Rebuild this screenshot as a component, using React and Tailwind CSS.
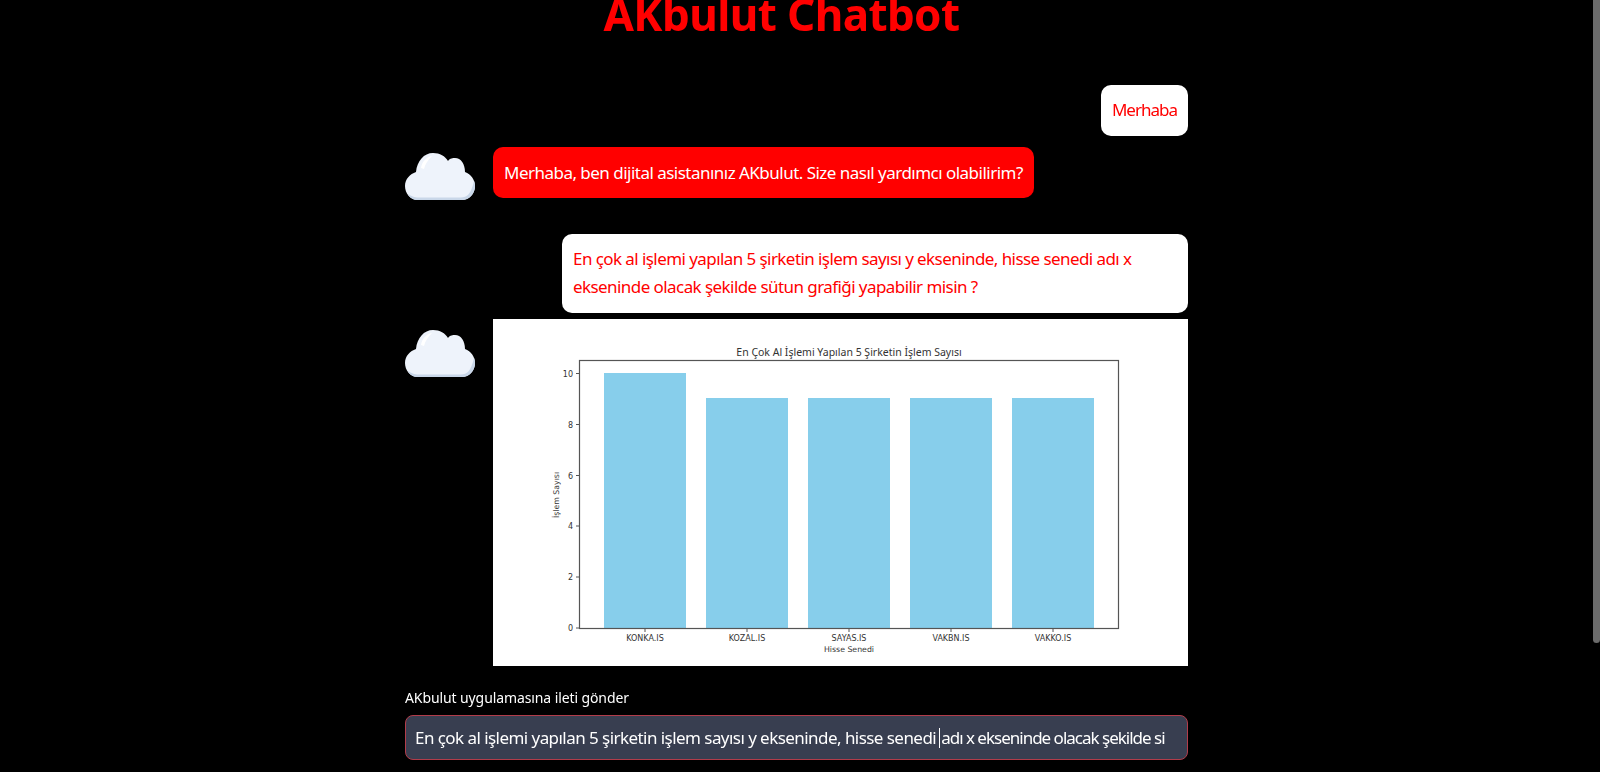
const FONT = "font-['Noto_Sans','Open_Sans',sans-serif]";

function Cloud() {
  return (
    <svg width="70" height="47" viewBox="0 0 70 47" className="shrink-0" aria-hidden="true">
      <path d="M13 47 C5 47 0 40 0 33 C0 26 5 21 11 19 C12 8 19 0 28 0 C35 0 40 3 43 8 C45 5 48 5 50 5 C56 5 60 11 60 19 C66 21 70 27 70 33 C70 41 64 47 57 47 Z" fill="#eef3fb" />
      <path d="M3 41 C7 44 11 44.5 15 44.5 L56 44.5 C62 44.5 66 41 69 28 C70 30 70 32 70 33 C70 41 64 47 57 47 L13 47 C8 47 5 45 3 41 Z" fill="#c9d7e9" />
      <path d="M16 15 C17 9 21 4 27 3 C23 7 20 11 19 16 Z" fill="#ffffff" />
    </svg>
  );
}

const BARS = [
  { x: 604, h: 255, label: "KONKA.IS" },
  { x: 706, h: 230, label: "KOZAL.IS" },
  { x: 808, h: 230, label: "SAYAS.IS" },
  { x: 910, h: 230, label: "VAKBN.IS" },
  { x: 1012, h: 230, label: "VAKKO.IS" },
];
const TICKS = [
  { v: "0", y: 628 }, { v: "2", y: 577 }, { v: "4", y: 526 },
  { v: "6", y: 475.5 }, { v: "8", y: 424.5 }, { v: "10", y: 373.5 },
];

function Chart() {
  return (
    <svg width="695" height="347" viewBox="493 319 695 347" className="block bg-white" role="img">
      <g fontFamily="'DejaVu Sans', sans-serif" fill="#333">
        <text x="849" y="356" fontSize="10.5" textAnchor="middle" fontFamily="'Noto Sans', sans-serif">En Çok Al İşlemi Yapılan 5 Şirketin İşlem Sayısı</text>
        {BARS.map((b) => (
          <rect key={b.x} x={b.x} y={628 - b.h} width="82" height={b.h} fill="#87ceeb" />
        ))}
        <rect x="579.5" y="360.5" width="539" height="268" fill="none" stroke="#555" strokeWidth="1.2" />
        {TICKS.map((t) => (
          <g key={t.v}>
            <line x1="576" x2="579" y1={t.y} y2={t.y} stroke="#555" />
            <text x="573" y={t.y + 3} fontSize="8" textAnchor="end">{t.v}</text>
          </g>
        ))}
        {BARS.map((b) => (
          <g key={b.label}>
            <line x1={b.x + 41} x2={b.x + 41} y1="629" y2="632" stroke="#555" />
            <text x={b.x + 41} y="641" fontSize="8" textAnchor="middle">{b.label}</text>
          </g>
        ))}
        <text x="849" y="652" fontSize="7.8" textAnchor="middle">Hisse Senedi</text>
        <text transform="translate(558.5 495) rotate(-90)" fontSize="7.8" textAnchor="middle">İşlem Sayısı</text>
      </g>
    </svg>
  );
}

export default function App() {
  return (
    <div className="h-[772px] overflow-hidden bg-black">
      <div className={`flex h-[772px] blur-[0.4px] ${FONT}`}>
        <main className="flex-1 flex flex-col items-center">
          <h1 className="h-[85px] pr-[30px] text-center text-[44px] leading-[28px] font-bold text-[#ff0000] tracking-[-0.6px]">AKbulut Chatbot</h1>
          <div className="w-[783px] flex flex-col">
            <div className="flex justify-end">
              <div className="h-[51px] w-[87px] pb-[2px] flex items-center justify-center rounded-[10px] bg-white text-[#ff0000] text-[17px] tracking-[-1px]">Merhaba</div>
            </div>
            <div className="mt-[11px] flex items-start gap-[18px]">
              <div className="pt-[6px]"><Cloud /></div>
              <div className="h-[51px] w-[541px] flex items-center px-[11px] rounded-[10px] bg-[#ff0000] text-white text-[17px] tracking-[-0.52px] whitespace-nowrap">Merhaba, ben dijital asistanınız AKbulut. Size nasıl yardımcı olabilirim?</div>
            </div>
            <div className="mt-[34px] flex justify-end">
              <div className="w-[626px] h-[79px] rounded-[10px] bg-white text-[#ff0000] text-[17px] leading-[28px] px-[11px] pt-[11px] tracking-[-0.57px] whitespace-nowrap">
                En çok al işlemi yapılan 5 şirketin işlem sayısı y ekseninde, hisse senedi adı x<br />ekseninde olacak şekilde sütun grafiği yapabilir misin ?
              </div>
            </div>
            <div className="mt-[6px] flex items-start gap-[18px]">
              <div className="pt-[11px]"><Cloud /></div>
              <Chart />
            </div>
            <div className="mt-[23px] text-[14px] leading-[18px] text-white tracking-[-0.1px]">AKbulut uygulamasına ileti gönder</div>
            <div className="mt-[8px] h-[45px] flex items-center rounded-[8px] border-[1.5px] border-[#b23c4a] bg-[#383e50] px-[9px] text-[17px] text-white whitespace-nowrap overflow-hidden">
              <span className="tracking-[-0.55px]">En çok al işlemi yapılan 5 şirketin işlem sayısı y ekseninde, hisse senedi</span>
              <span className="ml-[3px] mr-[1px] inline-block h-[20px] w-px bg-white" />
              <span className="tracking-[-1px]">adı x ekseninde olacak şekilde si</span>
            </div>
          </div>
        </main>
        <div className="w-[7px] h-[643px] rounded-b-[4px] bg-[#6b6b6b]" />
      </div>
    </div>
  );
}
